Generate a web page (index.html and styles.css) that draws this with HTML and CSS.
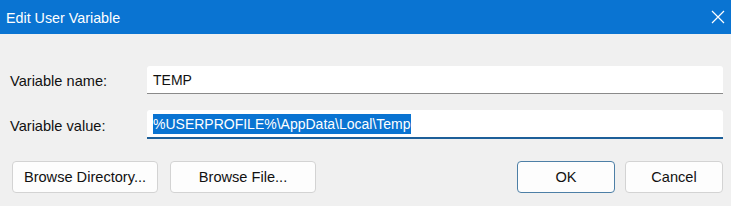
FILE: index.html
```html
<!DOCTYPE html>
<html>
<head>
<meta charset="utf-8">
<link rel="stylesheet" href="styles.css">
</head>
<body>
<div class="dialog">
  <div class="titlebar">
    <span class="title">Edit User Variable</span>
    <svg class="close" width="14" height="14" viewBox="0 0 14 14"><path d="M1 1 L13 13 M13 1 L1 13" stroke="#ffffff" stroke-width="1.2" fill="none"/></svg>
  </div>
  <div class="content">
    <div class="fields">
      <div class="label">Variable name:</div>
      <div class="input">TEMP</div>
      <div class="label">Variable value:</div>
      <div class="input focused"><span class="sel">%USERPROFILE%\AppData\Local\Temp</span></div>
    </div>
    <div class="buttons">
      <div class="group">
        <div class="btn wide">Browse Directory...</div>
        <div class="btn wide">Browse File...</div>
      </div>
      <div class="group">
        <div class="btn default">OK</div>
        <div class="btn">Cancel</div>
      </div>
    </div>
  </div>
</div>
</body>
</html>
```
FILE: styles.css
```css
html, body {
  margin: 0;
  padding: 0;
}
body {
  width: 731px;
  height: 206px;
  overflow: hidden;
  background: #f0f0f0;
  font-family: "Liberation Sans", Arial, sans-serif;
  font-size: 14.6px;
  color: #111111;
}
.dialog {
  display: flex;
  flex-direction: column;
  height: 206px;
}
.titlebar {
  height: 34px;
  background: #0a74d2;
  display: flex;
  align-items: center;
  justify-content: space-between;
  padding: 0 6px 0 6px;
  box-sizing: border-box;
}
.title {
  color: #ffffff;
  font-size: 14.3px;
  padding-top: 1px;
}
.content {
  padding: 32px 8px 0 10px;
  display: flex;
  flex-direction: column;
}
.fields {
  display: grid;
  grid-template-columns: 137px 576px;
  row-gap: 16px;
  align-items: center;
}
.label {
  padding-top: 2px;
}
.input {
  height: 28px;
  background: #ffffff;
  border-bottom: 1px solid #8a8a8a;
  box-sizing: border-box;
  display: flex;
  align-items: center;
  padding: 0 6px;
  border-radius: 3px 3px 0 0;
  font-size: 14px;
}
.input.focused {
  height: 29px;
  border-bottom: 2px solid #1d5f99;
}
.sel {
  background: #0a74d2;
  color: #ffffff;
  line-height: 20px;
  display: inline-block;
}
.buttons {
  margin-top: 22px;
  display: flex;
  justify-content: space-between;
  padding-left: 2px;
}
.group {
  display: flex;
  gap: 10px;
}
.btn {
  width: 98px;
  height: 32px;
  box-sizing: border-box;
  border: 1px solid #d3d3d3;
  border-radius: 4px;
  background: #fdfdfd;
  display: flex;
  align-items: center;
  justify-content: center;
}
.btn.wide {
  width: 146px;
  margin-right: 2px;
}
.btn.default {
  border-color: #4d7fa6;
}
```
